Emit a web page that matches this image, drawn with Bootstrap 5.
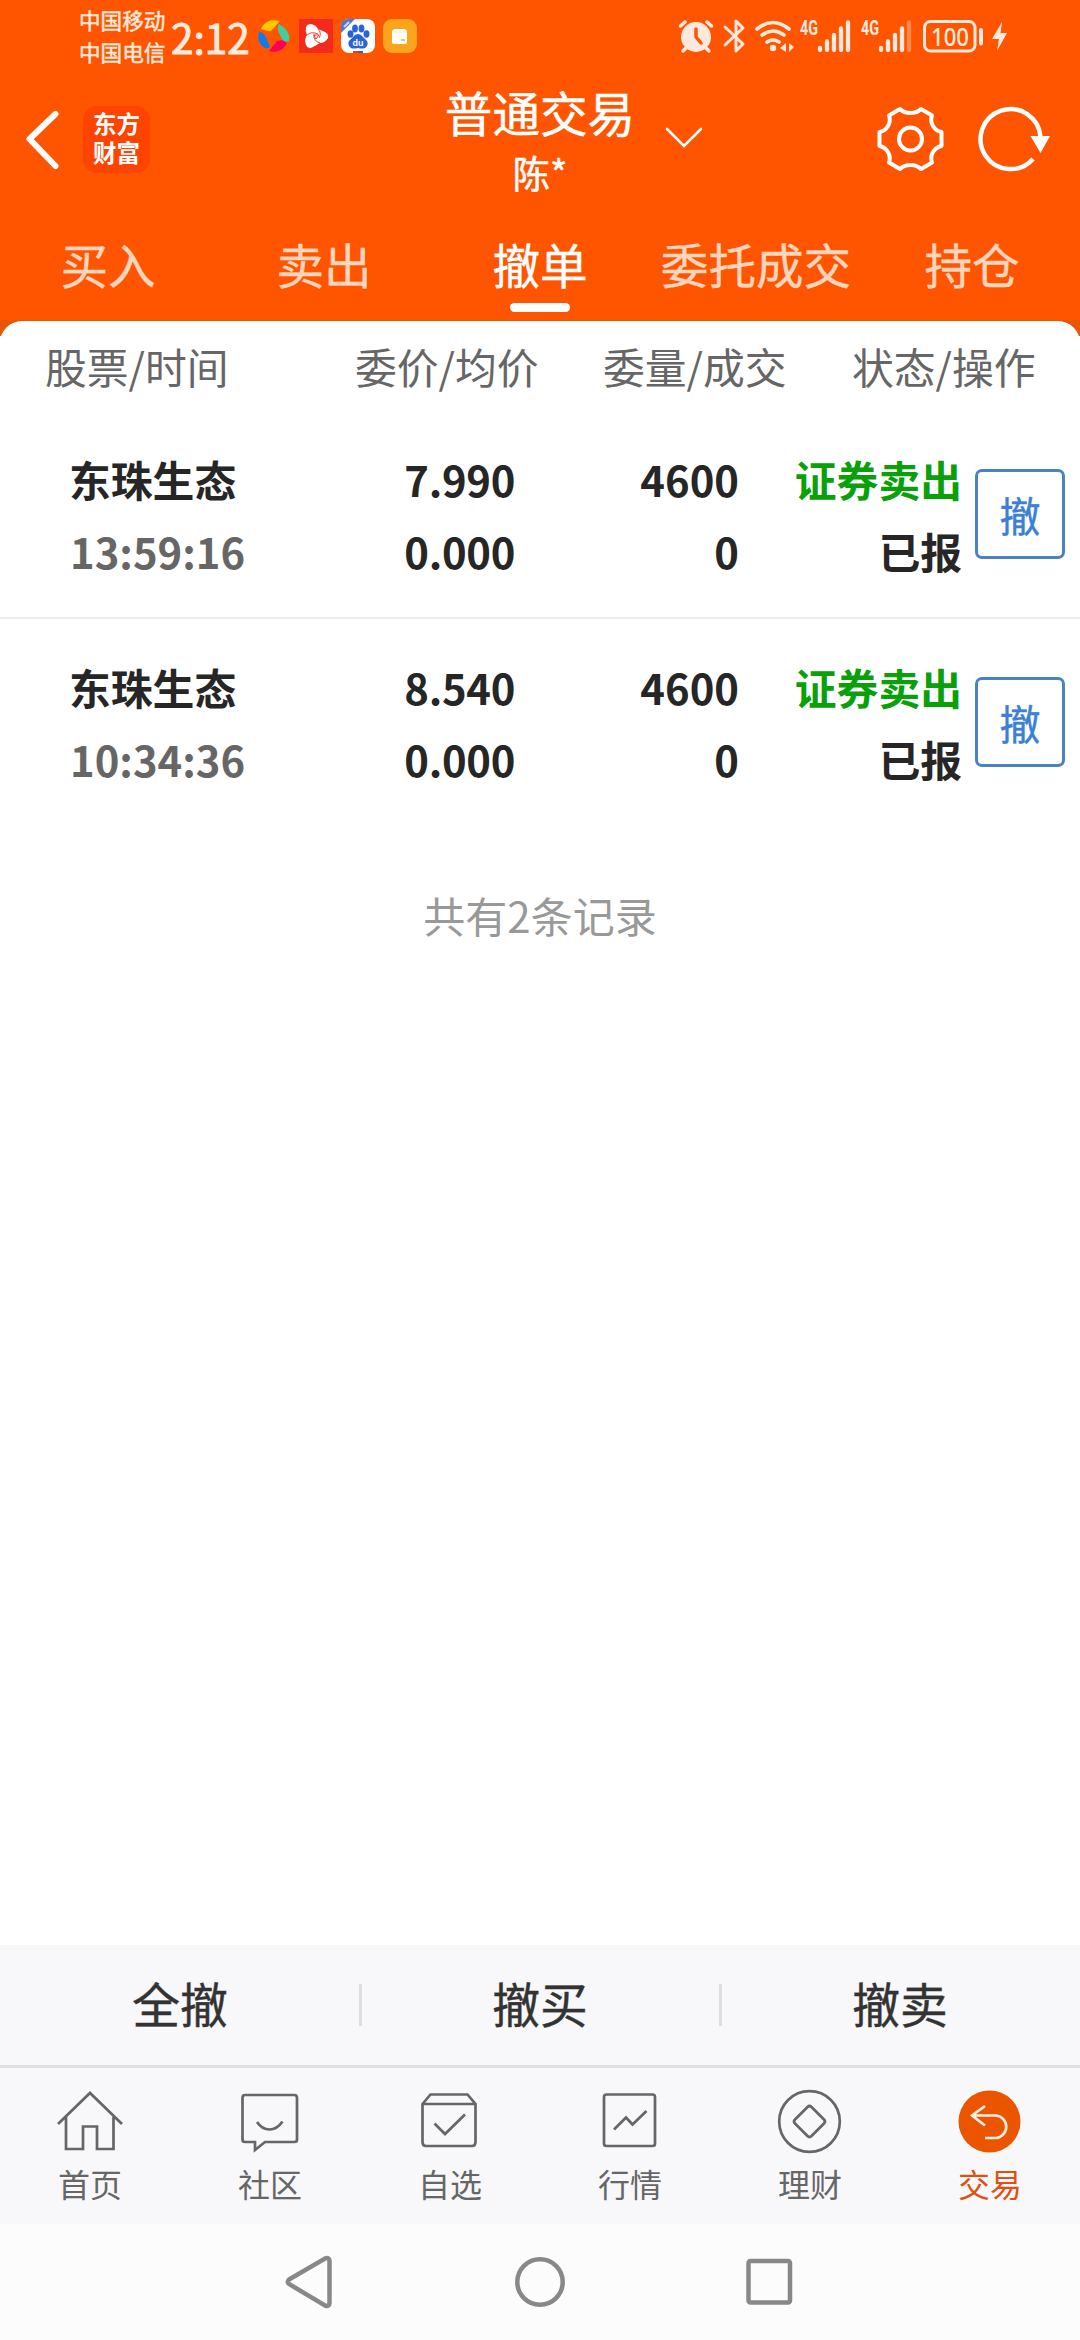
<!DOCTYPE html>
<html lang="zh-CN">
<head>
<meta charset="utf-8">
<meta name="viewport" content="width=device-width, initial-scale=1">
<title>普通交易</title>
<link rel="stylesheet" href="https://cdn.jsdelivr.net/npm/bootstrap@5.3.0/dist/css/bootstrap.min.css">
<style>
  body { font-family: "Noto Sans CJK SC", sans-serif; width: 1080px; height: 2340px; overflow: hidden; line-height: 1; color: #262626; background: #fff; }
  svg { display: block; flex: none; }
  .brand-zone { background: #ff5500; color: #fff; height: 320px; }
  .statusbar { height: 72px; padding-left: 79px; color: #ffe9dd; -webkit-text-stroke: .5px #ffe9dd; }
  .statusbar svg { -webkit-text-stroke: 0; }
  .carrier { font-size: 21.6px; line-height: 32px; width: 87px; padding-bottom: 1px; }
  .clock { font-size: 40.5px; width: 87px; padding-left: 5px; line-height: 72px; padding-top: 1px; -webkit-text-stroke: 1px #ffe9dd; }
  .app-icons { gap: 8px; }
  .titlebar { height: 134px; display: grid; grid-template-columns: 444px 192px 444px; }
  .logo-tile { width: 67px; height: 67px; border-radius: 14px; background: #ff4400; font-size: 23.5px; line-height: 29px; font-weight: 700; margin-left: 24px; padding-bottom: 3px; }
  .title-main { font-size: 47.6px; line-height: 58px; white-space: nowrap; padding-top: 3px; -webkit-text-stroke: .5px #fff; }
  .title-sub { font-size: 37.5px; line-height: 58px; padding-top: 2px; -webkit-text-stroke: .5px #fff; }
  .trade-tabs { height: 114px; }
  .trade-tabs .nav-link { width: 216px; height: 105px; padding: 33px 0 0; font-size: 47.6px; line-height: 50px; color: #ffd5bd; text-align: center; white-space: nowrap; border: 0; -webkit-text-stroke: .4px currentColor; }
  .trade-tabs .nav-link.active { color: #fff; }
  .tab-bar { width: 60px; height: 9px; border-radius: 5px; background: #fff; margin: 14px auto 0; }
  .corner-back { background: linear-gradient(#e85504 16px, #fff 16px); padding-top: 1px; height: 1625px; }
  .sheet { background: #fff; border-radius: 22px 22px 0 0; height: 1624px; }
  .head-row { height: 90px; font-size: 41.8px; line-height: 90px; color: #666; white-space: nowrap; padding-left: 45px; }
  .h-name { width: 310px; } .h-price { width: 248px; } .h-vol { width: 249px; }
  .order-row { height: 208px; font-size: 41.8px; font-weight: 700; line-height: 72px; padding: 32px 15px 0 69px; border-bottom: 2px solid #eee; white-space: nowrap; }
  .order-row.last-order { border-color: #fff; }
  .stamp { color: #666; padding-left: 1px; }
  .sold { color: #09a009; }
  .c-name { width: 224px; } .c-price { width: 222px; letter-spacing: -.3px; } .c-vol { width: 224px; } .c-state { width: 223px; }
  .btn-cancel { width: 90px; height: 90px; border: 3px solid #4a80c4; border-radius: 7px; color: #3b7fd6; font-size: 41px; line-height: 82px; padding: 0; margin: 26px 0 0 13px; -webkit-text-stroke: .4px #3b7fd6; }
  .record-count { font-size: 42px; line-height: 60px; color: #999; padding-top: 58px; }
  .batch { height: 120px; background: #f8f8fb; font-size: 47.8px; color: #333; -webkit-text-stroke: .4px #333; }
  .batch-cell { width: 360px; line-height: 60px; padding-bottom: 4px; }
  .split { width: 3px; height: 42px; background: #dedee0; margin: 0 -1.5px; }
  .app-nav { height: 159px; border-top: 3px solid #e0e0e2; background: #f8f8fb; color: #666; }
  .app-nav .nav-link { width: 180px; padding: 18px 0 0; color: #666; font-size: 32px; line-height: 44px; }
  .app-nav .nav-link.active { color: #e05010; }
  .app-nav svg { margin: 0 auto 5px; stroke: #666; stroke-width: 2.7; fill: none; }
  .sys-nav { height: 116px; background: #fcfcfc; gap: 180px; }
  .sys-nav svg { stroke: #888; stroke-width: 4.5; fill: none; }
</style>
<script src="https://cdn.jsdelivr.net/npm/bootstrap@5.3.0/dist/js/bootstrap.bundle.min.js"></script>
</head>
<body>
<header class="brand-zone">
  <div class="statusbar d-flex align-items-center">
    <div class="d-flex align-items-center">
      <div class="carrier text-nowrap"><div>中国移动</div><div>中国电信</div></div>
      <div class="clock text-nowrap">2:12</div>
    </div>
    <div class="app-icons d-flex align-items-center">
      <svg width="38" height="34" viewBox="0 0 38 34">
        <path d="M8 10C12 2 18 0 27 2L18 12Q12 12 8 10Z" fill="#ffc800"/>
        <path d="M26 5C34 9 37 16 36 22Q32 24 29 20L25 12Q24 8 26 5Z" fill="#3fd0a0"/>
        <path d="M34 24C30 32 23 34 16 32L24 22Q30 20 34 24Z" fill="#ff0055"/>
        <path d="M6 13Q10 13 12 17L17 27Q16 30 12 29C6 25 4 20 6 13Z" fill="#0a7cf5"/>
      </svg>
      <svg width="34" height="34" viewBox="0 0 34 34"><rect width="34" height="34" fill="#f42a1c"/>
        <path d="M7 8Q8 5 12 5Q17 6 19 10L26 13Q30 15 29 19Q26 24 21 24L14 28Q9 31 7 26Q5 20 8 16Q6 12 7 8Z" fill="#fff"/>
        <path d="M8 16Q12 12 19 15M19 10Q23 14 20 19M21 24Q14 22 15 15M15 16H20L17 20Z" fill="none" stroke="#f42a1c" stroke-width=".9"/></svg>
      <svg width="34" height="34" viewBox="0 0 34 34"><rect width="34" height="34" rx="8" fill="#fff"/>
        <path d="M8 0H14L0 14V8Q0 0 8 0Z" fill="#4a78d8"/><path d="M3 8L8 3" stroke="#cfdcff" stroke-width="2"/>
        <g fill="#2a62d8"><ellipse cx="9.500" cy="15" rx="3" ry="3.700"/><ellipse cx="14" cy="9.500" rx="2.900" ry="4"/><ellipse cx="20.500" cy="9.500" rx="2.900" ry="4"/><ellipse cx="25.500" cy="15" rx="3" ry="3.700"/><path d="M17 15Q20 15 22 18L26 22Q28 26 24 29Q21 30 17 29Q13 30 10 29Q6 26 8 22L12 18Q14 15 17 15Z"/><path d="M12 32H17V34H12Z" fill="#e53c36"/><path d="M17 32H22V34H17Z"/></g>
        <text x="17" y="27" text-anchor="middle" font-family="Liberation Sans" font-size="9" font-weight="700" fill="#fff">du</text></svg>
      <svg width="34" height="34" viewBox="0 0 34 34"><rect width="34" height="34" rx="9" fill="#fba41e"/><path d="M11 10H22L24 12V23Q24 25 22 25H11Q9 25 9 23V12Z" fill="#fff"/><path d="M10 13H24" stroke="#fde3b5"/><path d="M18 21H22" stroke="#fba41e" stroke-width="1.500"/></svg>
    </div>
    <svg class="ms-auto me-5" width="360" height="50" viewBox="671 11 360 50" fill="none" stroke="#ffe9dd" stroke-width="3" stroke-linecap="round" stroke-linejoin="round">
      <circle cx="695" cy="37" r="15" fill="#ffe9dd" stroke="none"/><path d="M679.500 26L684 22M710.500 26L706 22M685 48L682 51M705 48L708 51" stroke-width="3.500"/><path d="M695 29V37L700 43" stroke="#ff5500" stroke-width="3.500"/>
      <path d="M724 27L742 44L735 51V21L742 28L724 45"/>
      <path d="M756 29Q772 16 788 29M761 35Q772 27 783 35M766 42Q772 38 778 42" stroke-width="3.600"/><circle cx="772" cy="48" r="3.200" fill="#ffe9dd" stroke="none"/>
      <path d="M785 43V52L779 48ZM788 43V52L793 47Z" fill="#ffe9dd" stroke="none"/>
      <g stroke-width="4.300"><path d="M819 48V50M826 41.500V50M833 35V50M840 28.500V50M847 22.500V50"/><path d="M880 48V50M887 41.500V50M894 35V50M901 28.500V50"/><path d="M908 22.500V50" opacity=".35"/></g>
      <g fill="#ffe9dd" stroke="none" font-family="Roboto, sans-serif" font-weight="700" font-size="20"><text x="799" y="35" textLength="18" lengthAdjust="spacingAndGlyphs">4G</text><text x="860" y="35" textLength="18" lengthAdjust="spacingAndGlyphs">4G</text><text x="930" y="45.500" font-size="25" font-weight="500" font-family="Noto Sans, sans-serif" textLength="38" lengthAdjust="spacingAndGlyphs">100</text></g>
      <rect x="923.500" y="21.500" width="50.500" height="29.500" rx="6"/><path d="M980 30V43.500" stroke-width="4"/>
      <path d="M1001 22L991 39H998L996 51L1006 33H999.500Z" fill="#ffe9dd" stroke="none"/>
    </svg>
  </div>
  <div class="titlebar">
    <div class="d-flex align-items-center">
      <svg width="59" height="66" viewBox="0 0 59 66"><path d="M55.500 8L29.500 33L55.500 60" fill="none" stroke="#fff" stroke-width="6" stroke-linecap="round" stroke-linejoin="round"/></svg>
      <div class="logo-tile d-flex flex-column align-items-center justify-content-center"><span>东方</span><span>财富</span></div>
    </div>
    <div class="text-center pt-2">
      <div class="title-main">普通交易</div>
      <div class="title-sub">陈*</div>
    </div>
    <div class="d-flex align-items-center">
      <svg class="ms-4" width="50" height="40" viewBox="660 119 50 40"><path d="M667 129L684 146L701 129" fill="none" stroke="#fff" stroke-width="2.600" stroke-linecap="round"/></svg>
      <svg class="ms-auto" width="205" height="72" viewBox="875 103 205 72" fill="none" stroke="#fff" stroke-width="4">
        <path stroke-linejoin="round" d="M900 109L889 115.500Q891 121 888 126Q885 131 879.500 132V146Q885 147 888 152Q891 157 889 162.500L900 169Q904 165 910.500 165Q917 165 921 169L932 162.500Q930 157 933 152Q936 147 941.500 146V132Q936 131 933 126Q930 121 932 115.500L921 109Q917 113 910.500 113Q904 113 900 109Z"/>
        <circle cx="910.500" cy="139" r="11.500"/>
        <path d="M1033 159A30 30 0 1 1 1040.500 137" stroke-width="4.500"/><path d="M1030.500 136H1050L1040.500 153Z" fill="#fff" stroke="none"/>
      </svg>
    </div>
  </div>
  <nav class="trade-tabs nav flex-nowrap">
    <a class="nav-link">买入</a><a class="nav-link">卖出</a>
    <a class="nav-link active">撤单<div class="tab-bar"></div></a>
    <a class="nav-link">委托成交</a><a class="nav-link">持仓</a>
  </nav>
</header>
<main class="corner-back">
  <div class="sheet">
    <div class="head-row d-flex"><span class="h-name">股票/时间</span><span class="h-price">委价/均价</span><span class="h-vol">委量/成交</span><span>状态/操作</span></div>
    <section class="order-row d-flex">
      <div class="c-name"><div>东珠生态</div><div class="stamp">13:59:16</div></div>
      <div class="c-price text-end"><div>7.990</div><div>0.000</div></div>
      <div class="c-vol text-end"><div>4600</div><div>0</div></div>
      <div class="c-state text-end"><div class="sold">证券卖出</div><div>已报</div></div>
      <button class="btn btn-cancel" type="button">撤</button>
    </section>
    <section class="order-row last-order d-flex">
      <div class="c-name"><div>东珠生态</div><div class="stamp">10:34:36</div></div>
      <div class="c-price text-end"><div>8.540</div><div>0.000</div></div>
      <div class="c-vol text-end"><div>4600</div><div>0</div></div>
      <div class="c-state text-end"><div class="sold">证券卖出</div><div>已报</div></div>
      <button class="btn btn-cancel" type="button">撤</button>
    </section>
    <div class="record-count text-center">共有2条记录</div>
  </div>
</main>
<footer>
  <div class="batch d-flex align-items-center text-center">
    <div class="batch-cell">全撤</div><div class="split"></div><div class="batch-cell">撤买</div><div class="split"></div><div class="batch-cell">撤卖</div>
  </div>
  <nav class="app-nav nav flex-nowrap text-center">
    <a class="nav-link"><svg width="70" height="70"><path d="M3 38L35 7L67 38M11 31V63H28V40.500H42V63H58.500V31"/></svg>首页</a>
    <a class="nav-link"><svg width="70" height="70"><path d="M10 9H59.500Q62 9 62 12V53.500Q62 56 59.500 56H30L20 64V56H10Q7.500 56 7.500 53.500V12Q7.500 9 10 9ZM22 36Q27 43.500 34.500 43.500Q42 43.500 47.500 35.500"/></svg>社区</a>
    <a class="nav-link"><svg width="70" height="70"><path d="M7.500 18L15.500 8.500H52.500L60.500 18V56Q60.500 60 57 60H11Q7.500 60 7.500 56ZM7.500 18H60.500M19.500 37.500L30 48L50 28.500"/></svg>自选</a>
    <a class="nav-link"><svg width="70" height="70"><rect x="9" y="8.500" width="51" height="51.500" rx="2.500"/><path d="M19 43.500L31 31.500L37.500 38.500L51.500 25"/></svg>行情</a>
    <a class="nav-link"><svg width="70" height="70"><circle cx="34.500" cy="35.500" r="30.300"/><path d="M32.500 21Q34.500 19 36.500 21L49 33.500Q51 35.500 49 37.500L36.500 50Q34.500 52 32.500 50L20 37.500Q18 35.500 20 33.500Z"/></svg>理财</a>
    <a class="nav-link active"><svg width="70" height="70"><circle cx="34.500" cy="35.500" r="31" fill="#eb5500" stroke="none"/><path stroke="#fff0e2" d="M30 20L17 29.500L30 39.500M17 29.500H41A11.300 11.300 0 0 1 41 52H30"/></svg>交易</a>
  </nav>
  <div class="sys-nav d-flex justify-content-center align-items-center">
    <svg width="50" height="54"><path d="M4 24.500L40 3.500Q44.500 2 44.500 6V48Q44.500 52 40 50.500L4 29Q1.500 27 4 24.500Z"/></svg>
    <svg width="50" height="54"><circle cx="25" cy="27" r="22.700"/></svg>
    <svg width="50" height="54"><rect x="3.500" y="6" width="41.500" height="41.500" rx="2"/></svg>
  </div>
</footer>
</body>
</html>
